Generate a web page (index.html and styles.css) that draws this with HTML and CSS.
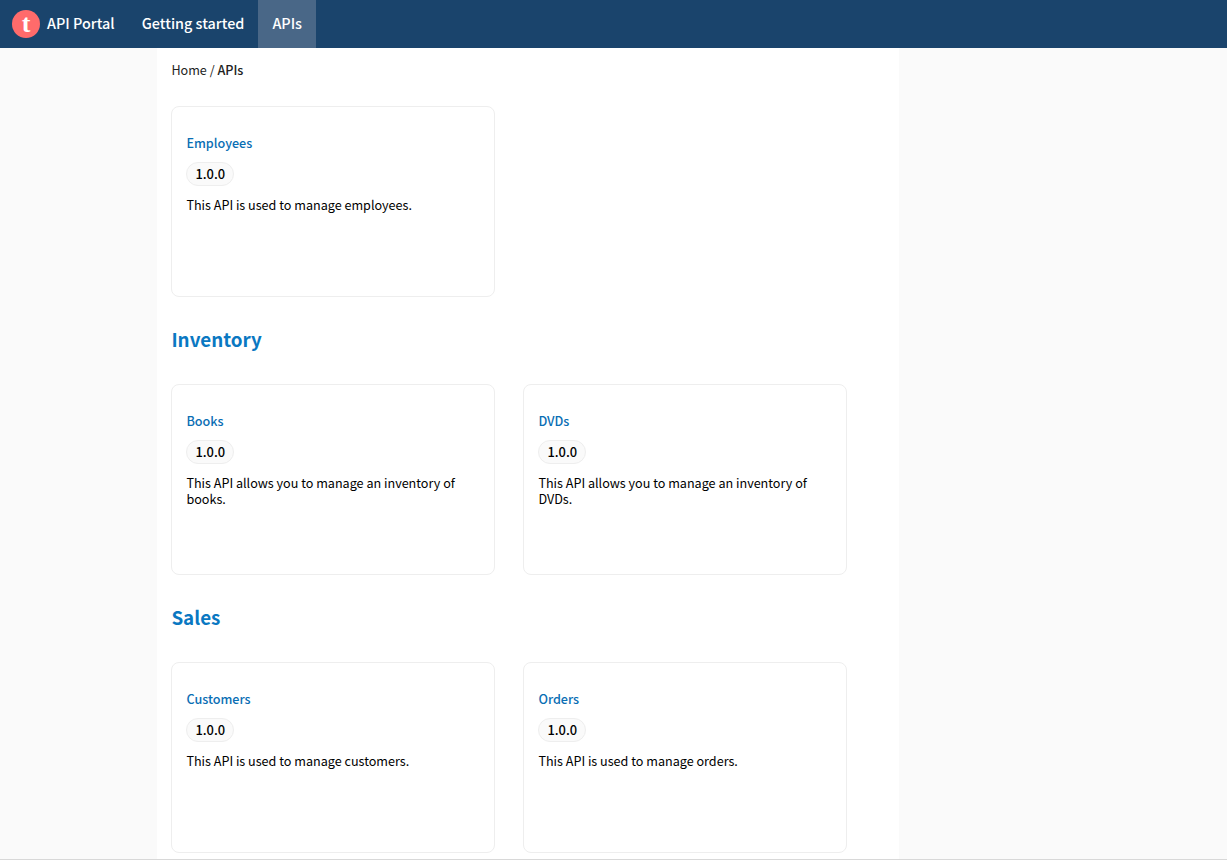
FILE: index.html
```html
<!DOCTYPE html>
<html lang="en">
<head>
<meta charset="utf-8">
<title>API Portal</title>
<link rel="stylesheet" href="styles.css">
</head>
<body>
<nav class="topbar">
  <a class="brand">
    <svg class="logo" width="28" height="28" viewBox="0 0 28 28" aria-hidden="true"><circle cx="14" cy="14" r="14" fill="#ff6b6b"/></svg>
    <span class="logo-t">t</span>
    <span class="nav-label">API Portal</span>
  </a>
  <a class="nav-item"><span class="nav-label">Getting started</span></a>
  <a class="nav-item active"><span class="nav-label">APIs</span></a>
</nav>
<div class="layout">
  <main class="content">
    <div class="crumbs">Home / <b>APIs</b></div>
    <div class="cards">
      <article class="card"><a class="card-title">Employees</a><div><span class="version">1.0.0</span></div><p>This API is used to manage employees.</p></article>
    </div>
    <h2>Inventory</h2>
    <div class="cards">
      <article class="card"><a class="card-title">Books</a><div><span class="version">1.0.0</span></div><p>This API allows you to manage an inventory of books.</p></article>
      <article class="card"><a class="card-title">DVDs</a><div><span class="version">1.0.0</span></div><p>This API allows you to manage an inventory of DVDs.</p></article>
    </div>
    <h2>Sales</h2>
    <div class="cards">
      <article class="card"><a class="card-title">Customers</a><div><span class="version">1.0.0</span></div><p>This API is used to manage customers.</p></article>
      <article class="card"><a class="card-title">Orders</a><div><span class="version">1.0.0</span></div><p>This API is used to manage orders.</p></article>
    </div>
  </main>
</div>
```

FILE: styles.css
```css
* { box-sizing: border-box; }
html, body { margin: 0; height: 100%; overflow: hidden; }
body {
  background: #fafafa;
  color: #000;
  font-family: "Noto Sans CJK SC", "Noto Sans", sans-serif;
  font-size: 12.6px;
  line-height: 16px;
  border-bottom: 1px solid #d8d8d8;
}
.topbar {
  display: flex;
  height: 48px;
  background: #1a446c;
  color: #fff;
  font-size: 14.4px;
  font-weight: 500;
}
.brand {
  position: relative;
  display: flex;
  align-items: center;
  gap: 7px;
  padding: 0 13.2px 0 12px;
}
.logo { display: block; }
.logo-t {
  position: absolute;
  left: 12px;
  width: 28px;
  text-align: center;
  font-family: "Liberation Serif", serif;
  font-weight: 700;
  font-size: 26px;
  line-height: 28px;
  color: #fff;
}
.nav-label { display: block; margin-bottom: 2px; }
.nav-item {
  display: flex;
  align-items: center;
  padding: 0 14px;
}
.nav-item.active { background: #496787; }
.layout { margin-left: 157px; width: 742px; height: 812px; background: #fff; padding: 0 14.4px; }
.crumbs { padding-top: 14px; height: 58px; color: #222; }
.crumbs b { font-weight: 500; }
.cards { display: flex; gap: 28px; }
.card {
  width: 324px;
  height: 191px;
  flex: none;
  padding: 28px 14px 0;
  background: #fff;
  border: 1px solid #eeeeee;
  border-radius: 8px;
}
.card-title { display: block; color: #0a6eb4; font-weight: 500; }
.version {
  display: inline-block;
  margin-top: 11px;
  height: 24px;
  padding: 0 8px;
  background: #fafafa;
  border: 1px solid #eeeeee;
  border-radius: 12px;
  font-size: 12.9px;
  font-weight: 500;
  line-height: 22px;
}
.card p { margin: 11px 0 0; }
h2 {
  margin: 0;
  height: 87px;
  padding-top: 30px;
  color: #0a78c2;
  font-size: 18.8px;
  line-height: 24px;
  font-weight: 700;
}
```
